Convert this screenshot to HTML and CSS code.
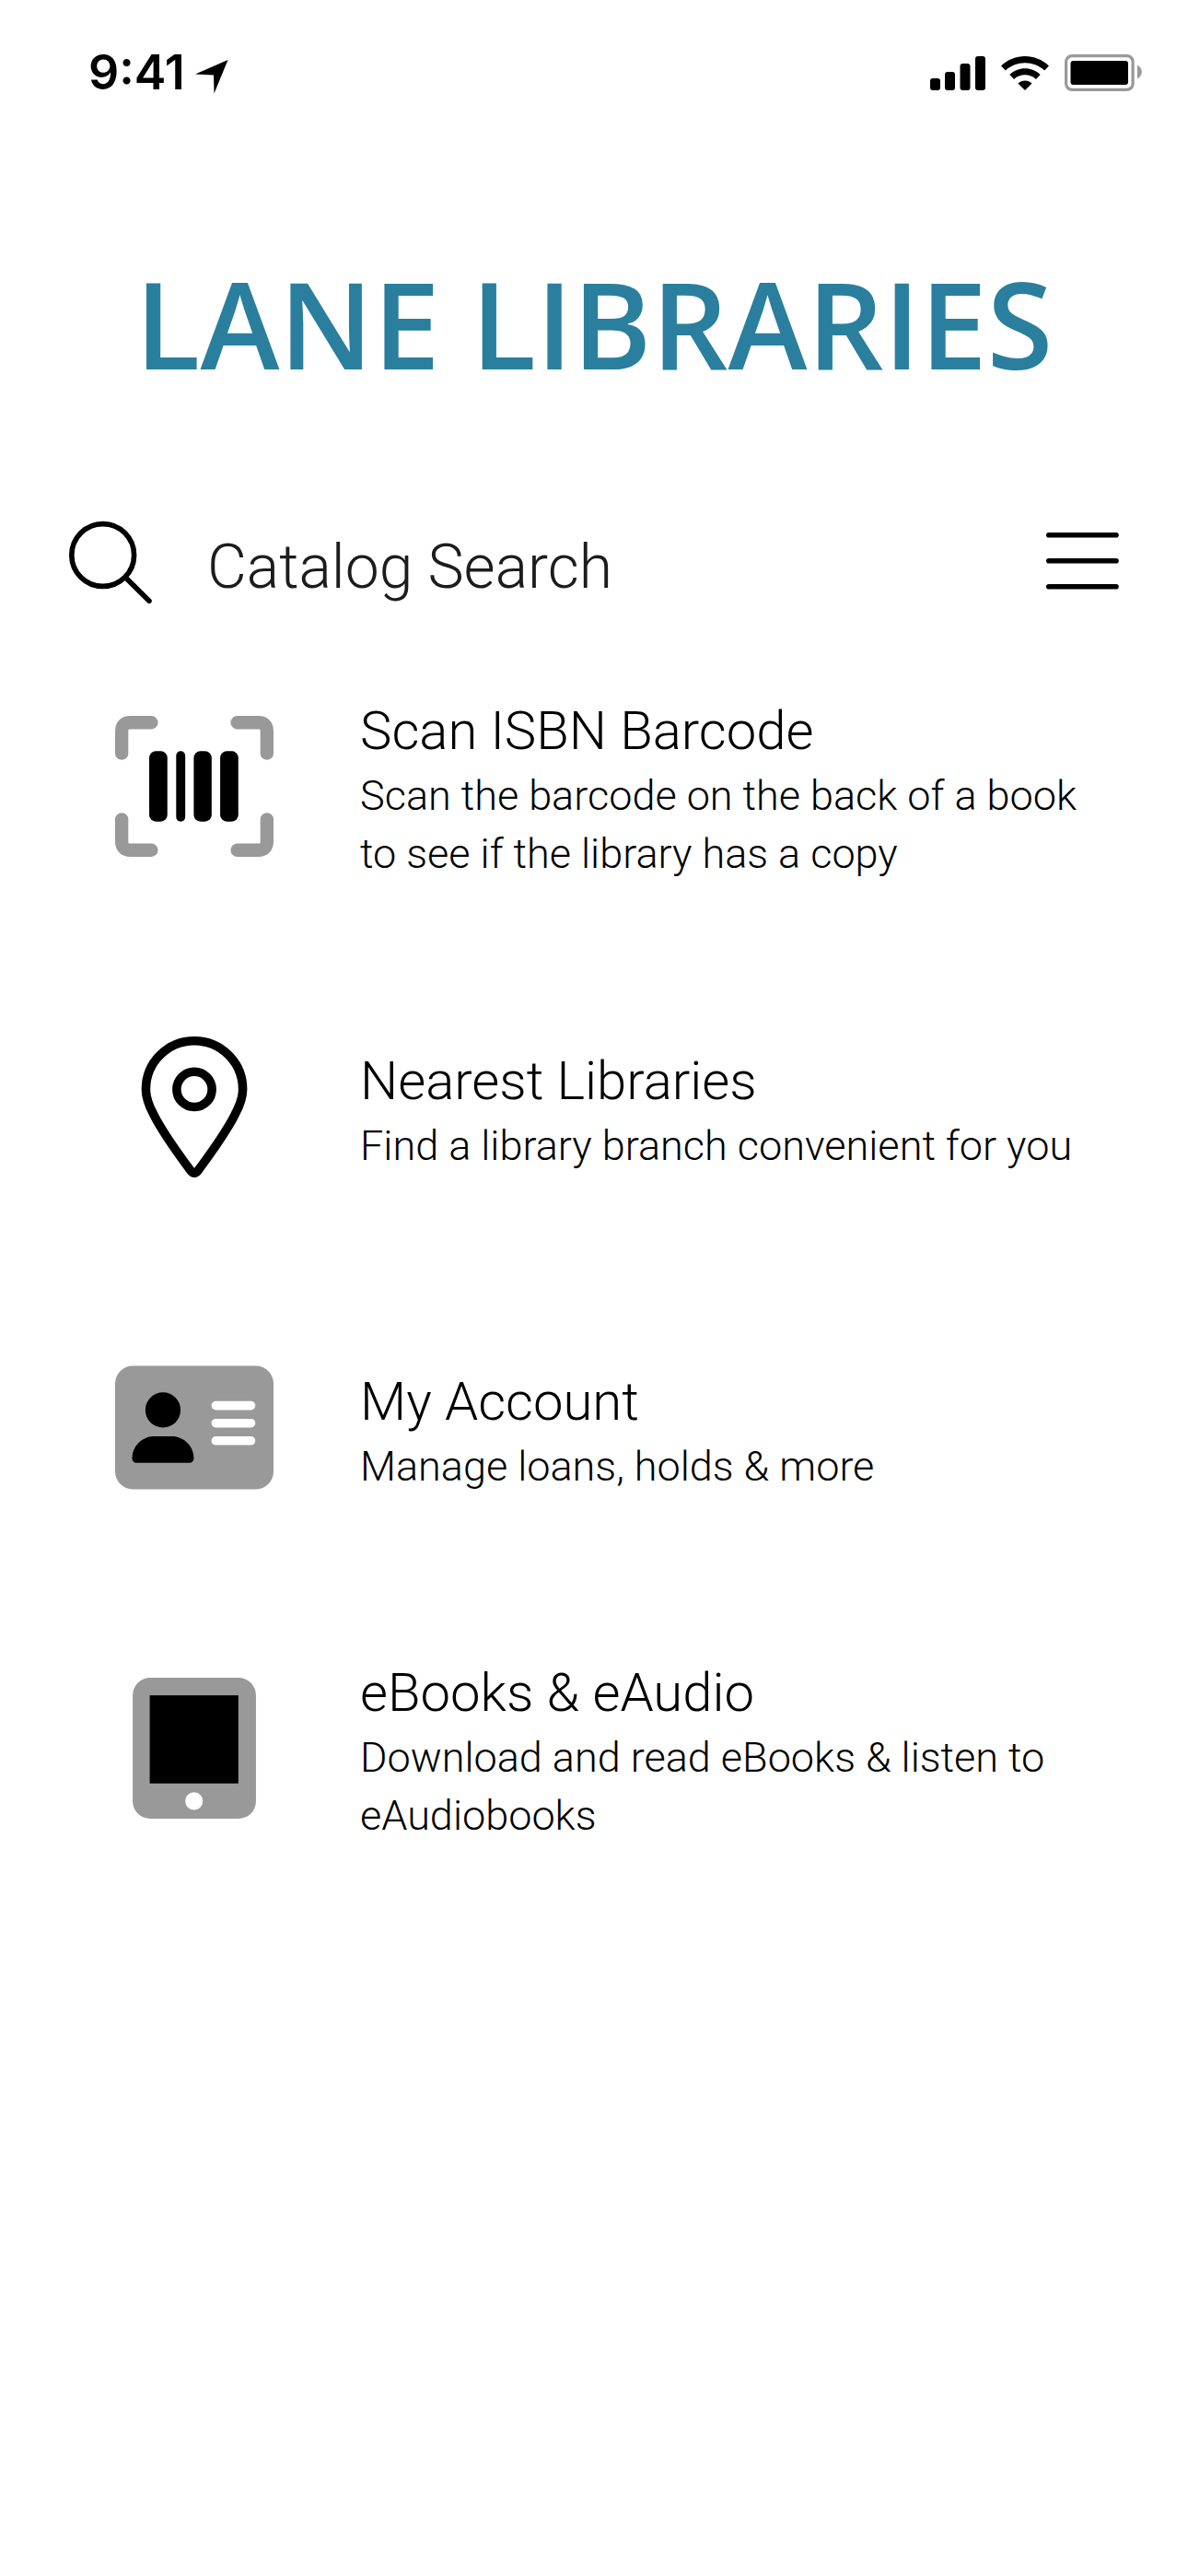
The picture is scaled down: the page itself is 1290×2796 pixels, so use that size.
FILE: index.html
```
<!DOCTYPE html>
<html lang="en">
<head>
    <meta charset="UTF-8">
    <meta name="viewport" content="width=device-width, initial-scale=1.0">
    <title>Lane Libraries</title>
    <link rel="stylesheet" href="styles.css">
</head>
<body>
    <div class="status-bar">
        <div class="status-left">
            <span class="time">9:41</span>
            <svg width="36" height="45" viewBox="0 0 36 45" aria-hidden="true">
                <path d="M35.5 8 L20.5 44.5 L20 24.5 L0 23.5 Z"/>
            </svg>
        </div>
        <div class="status-right">
            <svg width="60" height="37" viewBox="0 0 60 37" aria-hidden="true">
                <rect x="0" y="24" width="11" height="13" rx="3"/>
                <rect x="16" y="17" width="11" height="20" rx="3"/>
                <rect x="32.500" y="8" width="11" height="29" rx="3"/>
                <rect x="49" y="0" width="11" height="37" rx="3"/>
            </svg>
            <svg width="52" height="37" viewBox="0 0 52 37" aria-hidden="true">
                <path d="M0 10.500 C14.500 -3.500 37.500 -3.500 52 10.500 L47.200 15.500 C35.500 4.500 16.500 4.500 4.800 15.500 Z"/>
                <path d="M9.300 20 C18.500 11 33.500 11 42.700 20 L37.900 25 C31.500 18.800 20.500 18.800 14.100 25 Z"/>
                <path d="M18.400 29.500 C22.700 25.400 29.300 25.400 33.600 29.500 L26 37 Z"/>
            </svg>
            <svg width="84" height="40" viewBox="0 0 84 40" aria-hidden="true">
                <rect x="1.600" y="1.600" width="72.500" height="36.800" rx="6.500" fill="none" stroke="#999" stroke-width="3.200"/>
                <rect x="6.500" y="7" width="62.500" height="26" rx="3"/>
                <path d="M79 11.500 Q83.800 14.500 83.800 19 Q83.800 23.500 79 26.500 Z" fill="#999"/>
            </svg>
        </div>
    </div>

    <header class="header">
        <h1>LANE LIBRARIES</h1>
    </header>

    <form class="search-bar" role="search">
        <label for="catalog-search" aria-label="Catalog Search">
            <svg width="90" height="90" viewBox="0 0 90 90" fill="none" stroke="#000" stroke-width="5.600" stroke-linecap="round" aria-hidden="true">
                <circle cx="36.700" cy="37.500" r="33.900"/>
                <path d="M61.500 62 L87 87.200"/>
            </svg>
        </label>
        <input type="text" id="catalog-search" class="search-input" placeholder="Catalog Search">
        <button type="button" class="menu-button" aria-label="Menu">
            <svg width="80" height="64" viewBox="0 0 80 64" stroke="#000" stroke-width="5.600" stroke-linecap="round" aria-hidden="true">
                <path d="M3.800 2.800 H77 M3.800 30.800 H77 M3.800 58.800 H77"/>
            </svg>
        </button>
    </form>

    <nav>
        <ul class="menu-list">
            <li>
                <a href="#" class="menu-item">
                    <svg class="menu-icon" viewBox="0 0 576 512" aria-hidden="true">
                        <path d="M24 136 V56 Q24 24 56 24 H132 M444 24 H520 Q552 24 552 56 V136 M552 376 V456 Q552 488 520 488 H444 M132 488 H56 Q24 488 24 456 V376" fill="none" stroke="#999" stroke-width="48" stroke-linecap="round"/>
                        <rect x="124" y="128" width="66" height="256" rx="24"/>
                        <rect x="222" y="128" width="33" height="256" rx="16"/>
                        <rect x="286" y="128" width="65" height="256" rx="24"/>
                        <rect x="382" y="128" width="66" height="256" rx="24"/>
                    </svg>
                    <div class="menu-text">
                        <h2>Scan ISBN Barcode</h2>
                        <p>Scan the barcode on the back of a book to see if the library has a copy</p>
                    </div>
                </a>
            </li>
            <li>
                <a href="#" class="menu-item">
                    <svg class="menu-icon" viewBox="0 0 384 512" fill="none" stroke="#000" stroke-width="32" aria-hidden="true">
                        <path d="M368 192 C368 94.800 289.200 16 192 16 S16 94.800 16 192 C16 217 26 249 44 283 C75 345 131 423 180 489 C186 498 198 498 204 489 C253 423 309 345 340 283 C358 249 368 217 368 192 Z"/>
                        <circle cx="192" cy="192" r="64"/>
                    </svg>
                    <div class="menu-text">
                        <h2>Nearest Libraries</h2>
                        <p>Find a library branch convenient for you</p>
                    </div>
                </a>
            </li>
            <li>
                <a href="#" class="menu-item">
                    <svg class="menu-icon" viewBox="0 0 576 512" aria-hidden="true">
                        <rect x="0" y="32" width="576" height="448" rx="64" fill="#999"/>
                        <circle cx="174" cy="192" r="64"/>
                        <path d="M142 288 H206 C250 288 286 324 286 368 C286 377 279 384 270 384 H78 C69 384 62 377 62 368 C62 324 98 288 142 288 Z"/>
                        <path d="M366 176 H494 M366 240 H494 M366 304 H494" stroke="#fff" stroke-width="32" stroke-linecap="round"/>
                    </svg>
                    <div class="menu-text">
                        <h2>My Account</h2>
                        <p>Manage loans, holds &amp; more</p>
                    </div>
                </a>
            </li>
            <li>
                <a href="#" class="menu-item">
                    <svg class="menu-icon" viewBox="0 0 448 512" aria-hidden="true">
                        <rect width="448" height="512" rx="64" fill="#999"/>
                        <rect x="62" y="64" width="322" height="320"/>
                        <circle cx="223" cy="448" r="32" fill="#fff"/>
                    </svg>
                    <div class="menu-text">
                        <h2>eBooks &amp; eAudio</h2>
                        <p>Download and read eBooks &amp; listen to eAudiobooks</p>
                    </div>
                </a>
            </li>
        </ul>
    </nav>
</body>
</html>
```
FILE: styles.css
```
* {
    box-sizing: border-box;
}

body {
    font-family: Roboto, "Liberation Sans", sans-serif;
    font-weight: 300;
    margin: 0;
    background-color: #fff;
    color: #000;
}

/* Status bar */
.status-bar {
    display: flex;
    justify-content: space-between;
    align-items: center;
    height: 158px;
    padding: 0 50px 0 96px;
}

.status-left,
.status-right {
    display: flex;
    align-items: center;
}

.status-left {
    gap: 11px;
}

.status-right {
    gap: 17px;
}

.time {
    font-family: Inter, sans-serif;
    font-size: 52px;
    font-weight: 600;
    line-height: 60px;
}

/* Header */
.header {
    padding: 125px 40px 122px;
    text-align: center;
}

h1 {
    margin: 0;
    font-family: "Open Sans", sans-serif;
    font-size: 130px;
    font-weight: 600;
    line-height: 136px;
    color: #2a7f9e;
}

/* Search */
.search-bar {
    display: flex;
    align-items: center;
    height: 138px;
    padding: 0 75px;
}

.search-bar svg {
    display: block;
}

.search-input {
    flex: 1;
    min-width: 0;
    padding: 12px 0 0 60px;
    border: none;
    outline: none;
    background: none;
    font: inherit;
    font-size: 66px;
    line-height: 76px;
    color: #1c1c1c;
}

.search-input::placeholder {
    color: #1c1c1c;
    opacity: 1;
}

.menu-button {
    padding: 0;
    border: none;
    background: none;
    cursor: pointer;
}

/* Menu */
.menu-list {
    list-style: none;
    margin: 0;
    padding: 0;
}

.menu-item {
    display: flex;
    align-items: center;
    gap: 94px;
    min-height: 348px;
    padding: 0 90px 0 125px;
    color: #000;
    text-decoration: none;
}

.menu-icon {
    flex: none;
    width: 172px;
    height: 153px;
}

.menu-text {
    flex: 1;
    padding-top: 7px;
}

.menu-text h2 {
    margin: 0;
    font-size: 58px;
    font-weight: 300;
    line-height: 77px;
}

.menu-text p {
    margin: 0;
    font-size: 45px;
    line-height: 63px;
}
```
